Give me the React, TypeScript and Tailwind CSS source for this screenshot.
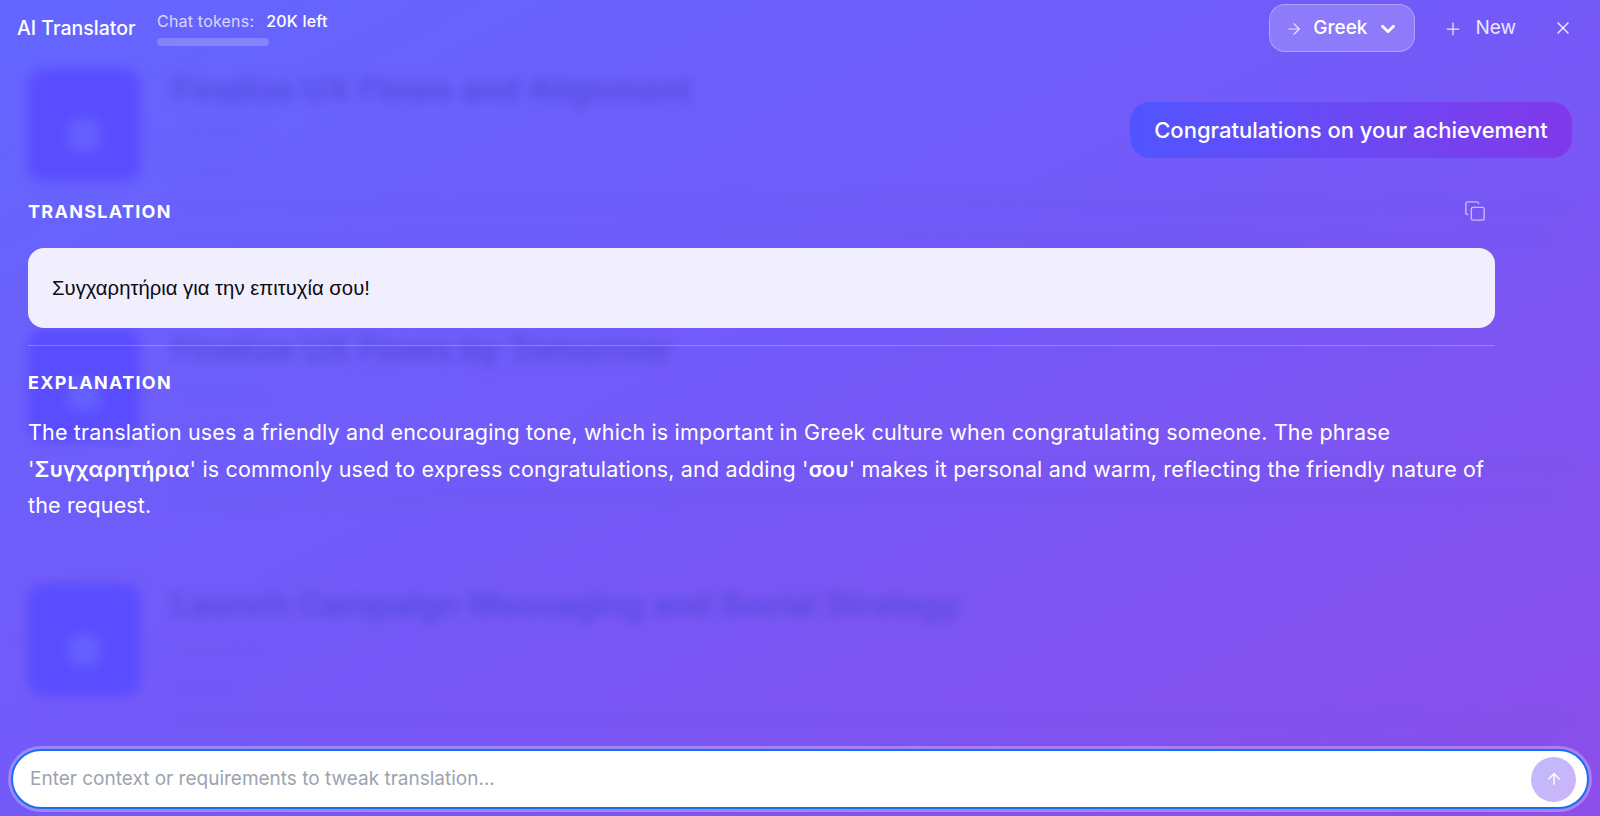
import { ArrowRight, ArrowUp, ChevronDown, Copy, Plus, X } from "lucide-react";

const blurred = [
  { title: "Finalize UX Flows and Alignment", gap: "mb-[84px]" },
  { title: "Finalize UX Flows by Tomorrow", gap: "mb-[79px]" },
  { title: "Launch Campaign Messaging and Social Strategy", gap: "" },
];

function BlurredRow({ title, gap }: { title: string; gap: string }) {
  return (
    <div className={`flex gap-8 ${gap}`}>
      <div className="flex h-[112px] w-[112px] shrink-0 items-center justify-center rounded-2xl bg-[#5a4cff]">
        <div className="mt-5 h-8 w-8 rounded-lg bg-[#6460ff]" />
      </div>
      <div className="flex-1 text-[#4f46d8]">
        <div className="text-[33px] font-semibold leading-10 opacity-80">{title}</div>
        <div className="mt-4 ml-3 text-sm opacity-30">By Someone</div>
        <div className="mt-4 text-sm opacity-30">Overview</div>
        <div className="mt-4 h-4 w-full rounded bg-[#5a50e4] opacity-10" />
        <div className="mt-4 h-4 w-[1380px] rounded bg-[#5a50e4] opacity-10" />
      </div>
    </div>
  );
}

export default function App() {
  return (
    <div className="relative h-[816px] w-full overflow-hidden bg-linear-to-br from-[#6366ff] via-[#7459f8] to-[#8c4eea] font-['Inter','Noto_Sans',sans-serif] text-white">
      <div className="absolute inset-x-[28px] top-[69px] blur-[6px]">
        {blurred.map((b) => (
          <BlurredRow key={b.title} title={b.title} gap={b.gap} />
        ))}
      </div>

      <div className="relative flex h-full flex-col">
        <header className="flex h-[56px] items-start pr-[27px]">
          <div className="ml-[17px] mt-[17px] w-[118px] whitespace-nowrap text-[19.5px] font-medium leading-[22px]">AI Translator</div>
          <div className="ml-[22px] mt-[11px] flex flex-col">
            <div className="flex gap-[12px] whitespace-nowrap text-[16px] leading-[20px] tracking-[0.2px]">
              <span className="text-white/75">Chat tokens:</span>
              <span className="font-medium">20K left</span>
            </div>
            <div className="mt-[7px] h-[8px] w-[112px] rounded-full bg-white/20" />
          </div>
          <div className="ml-auto flex items-center">
            <button className="mt-[4px] flex h-[48px] w-[146px] items-center justify-center gap-[10px] rounded-[16px] border border-white/30 bg-white/20 pt-px text-[19px] font-medium">
              <ArrowRight size={18} strokeWidth={1.5} className="text-white/80" />
              <span>Greek</span>
              <ChevronDown size={22} strokeWidth={3} />
            </button>
            <button className="ml-[28px] mt-[5px] flex items-center gap-[12px] text-[19px] text-white/85">
              <Plus size={20} strokeWidth={1.5} />
              <span>New</span>
            </button>
            <button className="ml-[37px] mt-[4px] text-white/85">
              <X size={20} strokeWidth={1.75} />
            </button>
          </div>
        </header>

        <div className="flex justify-end pr-[28px] pt-[46px]">
          <div className="flex h-[56px] w-[442px] items-center justify-center whitespace-nowrap rounded-[20px] bg-linear-to-r from-[#5055ff] to-[#8038ea] pt-px text-[22px] font-medium">
            Congratulations on your achievement
          </div>
        </div>

        <section className="ml-[28px] w-[1467px]">
          <div className="mt-[43px] flex h-[22px] items-center justify-between pr-[9px]">
            <h2 className="text-[18px] font-bold leading-[22px] tracking-[1.3px]">TRANSLATION</h2>
            <Copy size={22} strokeWidth={1.5} className="-translate-y-px text-white/60" />
          </div>
          <div className="mt-[25px] flex h-[80px] items-center rounded-2xl bg-[#f1effd] pl-[24px] font-['Liberation_Sans',sans-serif] text-[20.3px] text-[#0b0b14]">
            Συγχαρητήρια για την επιτυχία σου!
          </div>
          <div className="mt-[17px] h-px bg-white/25" />
          <h2 className="mt-[26px] text-[18px] font-bold leading-[22px] tracking-[1.3px]">EXPLANATION</h2>
          <p className="mt-[20px] text-[21.5px] leading-[36.7px] tracking-[0.15px]">
            The translation uses a friendly and encouraging tone, which is important in Greek culture when congratulating someone. The phrase '<b className="font-semibold">Συγχαρητήρια</b>' is commonly used to express congratulations, and adding '<b className="font-semibold">σου</b>' makes it personal and warm, reflecting the friendly nature of the request.
          </p>
        </section>

        <div className="mt-auto px-[11px] pb-[7px]">
          <div className="flex h-[60px] items-center rounded-full border-2 border-[#1a6bf5] bg-white pl-[17px] pr-[11px] shadow-[0_0_0_3px_rgba(255,255,255,0.28)]">
            <span className="flex-1 pt-px text-[19px] text-[#9ca3af]">Enter context or requirements to tweak translation...</span>
            <button className="flex h-[45px] w-[45px] items-center justify-center rounded-full bg-linear-to-br from-[#bcbcff] to-[#d0b2f6] text-white">
              <ArrowUp size={18} strokeWidth={2} />
            </button>
          </div>
        </div>
      </div>
    </div>
  );
}
